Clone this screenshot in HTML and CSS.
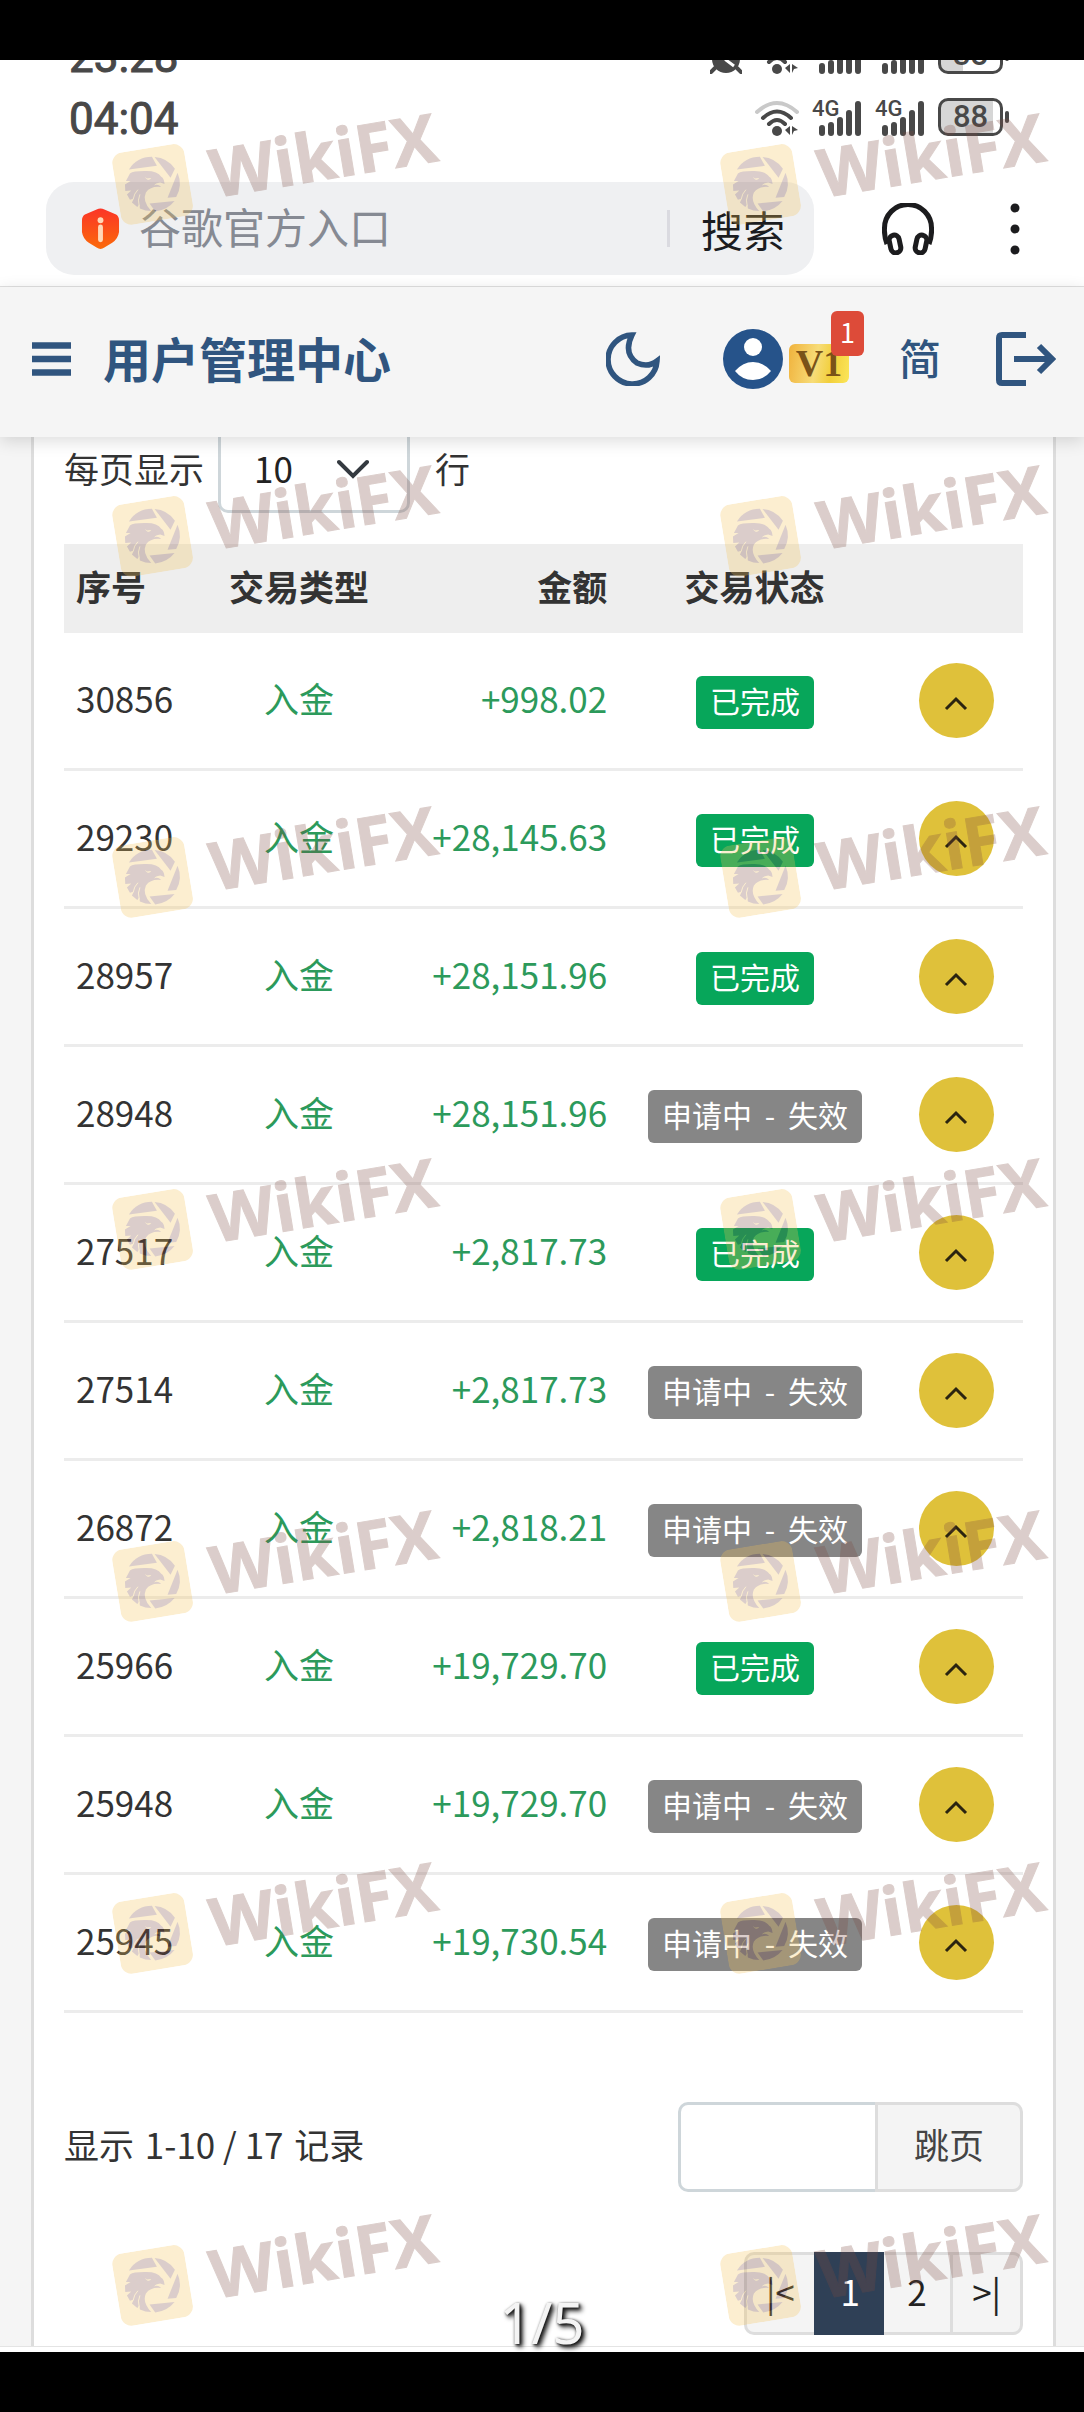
FILE: index.html
```html
<!DOCTYPE html>
<html lang="zh-CN">
<head>
<meta charset="utf-8">
<meta name="viewport" content="width=device-width, initial-scale=1">
<title>用户管理中心</title>
<link rel="stylesheet" href="styles.css">
</head>
<body>
<svg class="defs" aria-hidden="true">
  <symbol id="wifi" viewBox="0 0 44 36">
    <path d="M2 12Q22-6 42 12" fill="none" stroke="#c9c9c9" stroke-width="4" stroke-linecap="round"/>
    <path d="M8 18Q22 5 36 18M14 24Q22 16 30 24" fill="none" stroke="#484848" stroke-width="4" stroke-linecap="round"/>
    <circle cx="22" cy="31" r="5"/><path d="M35 26v9l-5-5zM37 26l6 4-4 1-2 4z"/>
  </symbol>
  <symbol id="signal" viewBox="0 0 50 36">
    <path d="M10 28v5M19 25v8M28 20v13M37 13v20M46 4v29" stroke="#484848" stroke-width="6" stroke-linecap="round"/>
  </symbol>
  <symbol id="chevron-up" viewBox="0 0 24 16">
    <path d="M2 13L12 3l10 10" fill="none" stroke="#2b2410" stroke-width="3"/>
  </symbol>
  <symbol id="eagle" viewBox="0 0 73 73">
    <rect width="73" height="73" rx="11" fill="#f5c355"/>
    <g transform="rotate(9.4 36.5 36.5) translate(36.5 36.5) scale(.333)" fill="#7d4b41">
      <path d="M-71-45A82 82 0 0 1-2-83L13-56Z"/>
      <path d="M6-82A82 82 0 0 1 67-47L54-20Z"/>
      <path d="M75-35A82 82 0 0 1 71 38L45 40Z"/>
      <path d="M66 50A82 82 0 0 1 8 81L-9 57Z"/>
      <path d="M-68-33Q-58-40-25-40Q14-42 26-23Q35-18 36-1L23-6Q8-4 5 3Q16-2 26 8Q-5 4-20 24Q-32 50-4 80Q-22 80-38 72L-40 60L-46 68L-62 54L-56 42L-68 46L-77 30L-64 18L-82 20L-83 0L-66-10L-80-10Z"/>
      <path d="M-58 44Q-56 28-44 16M-40 66Q-46 46-38 30" fill="none" stroke="#f5c355" stroke-width="3"/>
      <path d="M-24-22l8 4 12-1q-5 8-12 4z" fill="#f5c355"/>
    </g>
  </symbol>
</svg>
<div class="screen">
  <div class="bezel"></div>
  <div class="status status-old">
    <span class="time">23:28</span>
    <span class="indicators">
      <svg class="alarm" viewBox="0 0 32 36"><circle cx="16" cy="21" r="14"/><path d="M5 30l-4 4M27 30l4 4" stroke="#484848" stroke-width="4" stroke-linecap="round"/><path d="M16 12v10l8 6" stroke="#fff" stroke-width="3" fill="none"/></svg>
      <svg class="wifi"><use href="#wifi"/></svg>
      <span class="cell">4G<svg><use href="#signal"/></svg></span>
      <span class="cell">4G<svg><use href="#signal"/></svg></span>
      <span class="battery low">38</span>
    </span>
  </div>
  <div class="status">
    <span class="time">04:04</span>
    <span class="indicators">
      <svg class="wifi"><use href="#wifi"/></svg>
      <span class="cell">4G<svg><use href="#signal"/></svg></span>
      <span class="cell">4G<svg><use href="#signal"/></svg></span>
      <span class="battery">88</span>
    </span>
  </div>

  <form class="browser">
    <div class="search">
      <svg class="shield" viewBox="0 0 40 42"><defs><linearGradient id="fire" x2="0" y2="1"><stop stop-color="#fb3527"/><stop offset="1" stop-color="#fb6a0a"/></linearGradient></defs><path d="M16 1Q20-1 24 1L36 6Q39 8 39 12V24Q38 31 32 35L24 40Q20 43 16 40L8 35Q2 31 1 24V12Q1 8 4 6Z" fill="url(#fire)"/><circle cx="20" cy="12" r="3" fill="#ffd9b8"/><path d="M20 19v13" stroke="#ffd9b8" stroke-width="5" stroke-linecap="round"/></svg>
      <input type="text" aria-label="搜索内容" placeholder="谷歌官方入口">
      <button type="button" class="go">搜索</button>
    </div>
    <button type="button" class="icon headphones" aria-label="收听"><svg viewBox="0 0 52 52"><g fill="none" stroke="#1c1c1e" stroke-width="5"><path d="M5 41Q2 33 2.500 25A23.500 23.500 0 0 1 49.500 25Q50 33 47 41"/><rect x="8" y="32" width="10" height="18" rx="5" transform="rotate(-12 13 41)"/><rect x="34" y="32" width="10" height="18" rx="5" transform="rotate(12 39 41)"/></g></svg></button>
    <button type="button" class="icon more" aria-label="更多"><svg viewBox="0 0 10 52"><circle cx="5" cy="5" r="4.500"/><circle cx="5" cy="26" r="4.500"/><circle cx="5" cy="47" r="4.500"/></svg></button>
  </form>

  <header class="topbar">
    <button type="button" class="icon menu" aria-label="菜单"><svg viewBox="0 0 39 34"><path d="M0 3.500h39M0 17h39M0 30.500h39" stroke="#30557f" stroke-width="6.500"/></svg></button>
    <h1>用户管理中心</h1>
    <nav>
      <button type="button" class="icon moon" aria-label="深色模式"><svg viewBox="0 0 54 54"><path d="M26 3A24.500 24.500 0 1 0 51 29Q42 36 31 31Q17 21 26 3Z" fill="none" stroke="#30557f" stroke-width="5.500"/></svg></button>
      <a class="user" href="#" aria-label="账户">
        <svg viewBox="0 0 60 60"><circle cx="30" cy="30" r="30" fill="#26538a"/><circle cx="30" cy="18" r="9" fill="#fff"/><path d="M12 42Q20 33 30 33T48 42Q41 51 30 51T12 42Z" fill="#fff"/></svg>
        <span class="vip">V1</span><span class="count">1</span>
      </a>
      <button type="button" class="lang">简</button>
      <a class="icon logout" href="#" aria-label="退出"><svg viewBox="0 0 60 54"><path d="M30 3H6Q3 3 3 6V48Q3 51 6 51H30M18 27H56M43 14L56 27L43 40" fill="none" stroke="#30557f" stroke-width="6"/></svg></a>
    </nav>
  </header>

  <main>
    <section class="card">
      <div class="toolbar">
        <label for="size">每页显示</label>
        <span class="select"><select id="size"><option>10</option><option>20</option></select><svg viewBox="0 0 32 20"><path d="M2 3l14 14L30 3" fill="none" stroke="#343a40" stroke-width="4" stroke-linecap="round"/></svg></span>
        <span>行</span>
      </div>
      <table>
        <colgroup><col class="c-id"><col class="c-type"><col class="c-sum"><col class="c-state"><col></colgroup>
        <thead><tr><th>序号</th><th>交易类型</th><th>金额</th><th>交易状态</th><th></th></tr></thead>
        <tbody>
          <tr><td>30856</td><td>入金</td><td>+998.02</td><td><span class="tag done">已完成</span></td><td><button type="button" class="toggle" aria-label="展开"><svg><use href="#chevron-up"/></svg></button></td></tr>
          <tr><td>29230</td><td>入金</td><td>+28,145.63</td><td><span class="tag done">已完成</span></td><td><button type="button" class="toggle" aria-label="展开"><svg><use href="#chevron-up"/></svg></button></td></tr>
          <tr><td>28957</td><td>入金</td><td>+28,151.96</td><td><span class="tag done">已完成</span></td><td><button type="button" class="toggle" aria-label="展开"><svg><use href="#chevron-up"/></svg></button></td></tr>
          <tr><td>28948</td><td>入金</td><td>+28,151.96</td><td><span class="tag">申请中 <i>-</i> 失效</span></td><td><button type="button" class="toggle" aria-label="展开"><svg><use href="#chevron-up"/></svg></button></td></tr>
          <tr><td>27517</td><td>入金</td><td>+2,817.73</td><td><span class="tag done">已完成</span></td><td><button type="button" class="toggle" aria-label="展开"><svg><use href="#chevron-up"/></svg></button></td></tr>
          <tr><td>27514</td><td>入金</td><td>+2,817.73</td><td><span class="tag">申请中 <i>-</i> 失效</span></td><td><button type="button" class="toggle" aria-label="展开"><svg><use href="#chevron-up"/></svg></button></td></tr>
          <tr><td>26872</td><td>入金</td><td>+2,818.21</td><td><span class="tag">申请中 <i>-</i> 失效</span></td><td><button type="button" class="toggle" aria-label="展开"><svg><use href="#chevron-up"/></svg></button></td></tr>
          <tr><td>25966</td><td>入金</td><td>+19,729.70</td><td><span class="tag done">已完成</span></td><td><button type="button" class="toggle" aria-label="展开"><svg><use href="#chevron-up"/></svg></button></td></tr>
          <tr><td>25948</td><td>入金</td><td>+19,729.70</td><td><span class="tag">申请中 <i>-</i> 失效</span></td><td><button type="button" class="toggle" aria-label="展开"><svg><use href="#chevron-up"/></svg></button></td></tr>
          <tr><td>25945</td><td>入金</td><td>+19,730.54</td><td><span class="tag">申请中 <i>-</i> 失效</span></td><td><button type="button" class="toggle" aria-label="展开"><svg><use href="#chevron-up"/></svg></button></td></tr>
        </tbody>
      </table>
      <div class="summary">
        <p>显示 <span>1-10 / 17</span> 记录</p>
        <form class="jump"><input type="text" aria-label="页码"><button type="button">跳页</button></form>
      </div>
      <nav class="pages"><a href="#">|&lt;</a><a href="#" class="current">1</a><a href="#">2</a><a href="#">&gt;|</a></nav>
    </section>
  </main>
  <div class="edge"></div>
  <div class="bezel"></div>

  <div class="position">1/5</div>
  <div class="marks" aria-hidden="true">
    <div class="mark"><svg><use href="#eagle"/></svg><span>WikiFX</span></div><div class="mark"><svg><use href="#eagle"/></svg><span>WikiFX</span></div>
    <div class="mark"><svg><use href="#eagle"/></svg><span>WikiFX</span></div><div class="mark"><svg><use href="#eagle"/></svg><span>WikiFX</span></div>
    <div class="mark"><svg><use href="#eagle"/></svg><span>WikiFX</span></div><div class="mark"><svg><use href="#eagle"/></svg><span>WikiFX</span></div>
    <div class="mark"><svg><use href="#eagle"/></svg><span>WikiFX</span></div><div class="mark"><svg><use href="#eagle"/></svg><span>WikiFX</span></div>
    <div class="mark"><svg><use href="#eagle"/></svg><span>WikiFX</span></div><div class="mark"><svg><use href="#eagle"/></svg><span>WikiFX</span></div>
    <div class="mark"><svg><use href="#eagle"/></svg><span>WikiFX</span></div><div class="mark"><svg><use href="#eagle"/></svg><span>WikiFX</span></div>
    <div class="mark"><svg><use href="#eagle"/></svg><span>WikiFX</span></div><div class="mark"><svg><use href="#eagle"/></svg><span>WikiFX</span></div>
  </div>
</div>
</body>
</html>
```
FILE: styles.css
```css
* { box-sizing: border-box; }
body {
  margin: 0;
  background: #fff;
  color: #333;
  font: 35px/48px "Noto Sans CJK SC", sans-serif;
}
h1, p { margin: 0; }
a { color: inherit; text-decoration: none; }
button, input, select { margin: 0; padding: 0; border: 0; background: none; color: inherit; font: inherit; }
svg { display: block; }
.defs { position: absolute; width: 0; height: 0; }
.screen { position: relative; overflow: hidden; }
.bezel { height: 60px; background: #000; }

/* Phone status bar */
.status {
  display: flex;
  justify-content: space-between;
  align-items: flex-end;
  height: 38px;
  margin-bottom: 46px;
  padding: 0 81px 0 69px;
  color: #484848;
  fill: #484848;
}
.status-old { height: 14px; margin-bottom: 24px; overflow: hidden; }
.time { font: 44px/34px Roboto, sans-serif; -webkit-text-stroke: 1px #484848; }
.indicators { display: flex; align-items: flex-end; gap: 13px; }
.alarm { width: 32px; height: 36px; }
.wifi { width: 44px; height: 36px; }
.cell { position: relative; width: 50px; height: 36px; font: 500 22px/18px Roboto, sans-serif; }
.cell svg { position: absolute; top: 0; left: 0; width: 50px; height: 36px; }
.battery {
  position: relative;
  width: 65px;
  height: 38px;
  border: 3px solid #484848;
  border-radius: 10px;
  background: linear-gradient(90deg, #d6d6d6 88%, #fff 88%);
  font: 500 31px/32px Roboto, sans-serif;
  text-align: center;
}
.battery.low { background: linear-gradient(90deg, #d6d6d6 38%, #fff 38%); }
.battery::after { content: ""; position: absolute; top: 10px; right: -9px; width: 4px; height: 12px; border-radius: 2px; background: #484848; }

/* Browser search row */
.browser { display: flex; align-items: center; padding: 0 64px 11px 46px; border-bottom: 1px solid #e0e0e0; }
.search { display: flex; flex: 1; align-items: center; height: 93px; padding-left: 35px; border-radius: 28px; background: #eff0f2; }
.shield { width: 39px; height: 42px; }
.search input { flex: 1; min-width: 0; margin-left: 19px; padding-bottom: 5px; font-size: 42px; line-height: 60px; }
.search input::placeholder { color: #868a93; opacity: 1; }
.go { height: 37px; padding: 0 29px 0 31px; border-left: 3px solid #dadae0; color: #1b1c20; font-size: 42px; line-height: 32px; }
.headphones { width: 52px; margin-left: 68px; }
.more { width: 10px; margin-left: 76px; fill: #1c1c1e; }

/* Site header */
.topbar {
  position: relative;
  z-index: 1;
  display: flex;
  align-items: center;
  height: 150px;
  padding: 0 28px 6px 32px;
  background: #f5f5f5;
  box-shadow: 0 4px 16px rgba(0, 0, 0, .14);
  color: #30557f;
}
.menu { width: 39px; margin-right: 32px; }
h1 { padding-bottom: 5px; font-size: 48px; line-height: 60px; }
.topbar nav { display: flex; align-items: center; gap: 50px; margin-left: auto; }
.moon { width: 54px; margin-right: 13px; }
.user { position: relative; display: flex; align-items: center; gap: 6px; }
.user svg { width: 60px; }
.vip {
  width: 60px;
  height: 39px;
  margin-top: 9px;
  border-radius: 6px;
  background: linear-gradient(100deg, #f0b23c, #f7dc78 45%, #f2cf3a 70%, #fbe65a);
  color: #7a5218;
  font: bold 38px/39px "Liberation Serif", serif;
  text-align: center;
}
.count {
  position: absolute;
  top: -18px;
  right: -15px;
  width: 33px;
  height: 45px;
  border-radius: 6px;
  background: #dd4b39;
  color: #fff;
  font-size: 27px;
  line-height: 41px;
  text-align: center;
}
.lang { margin-right: 5px; padding-bottom: 5px; font-size: 42px; line-height: 60px; font-weight: 500; }
.logout { width: 60px; }

/* Records */
main { padding: 0 28px 0 31px; background: #f5f5f5; }
.card { padding: 0 30px 11px; border: solid #ddd; border-width: 0 3px; background: #fff; }
.toolbar { display: flex; align-items: center; gap: 14px; margin-top: -14px; padding-bottom: 31px; }
.select { position: relative; width: 192px; margin-right: 11px; }
.select select { display: block; width: 100%; height: 90px; padding-left: 33px; border: 3px solid #ced6da; border-radius: 10px; background: #fff; color: #222; appearance: none; }
.select svg { position: absolute; top: 36px; right: 41px; width: 32px; height: 20px; pointer-events: none; }
table { width: 100%; table-layout: fixed; border-spacing: 0; }
.c-id { width: 15%; }
.c-type { width: 19%; }
.c-sum { width: 24%; }
.c-state { width: 28%; }
th { height: 89px; padding: 0 0 6px; background: #eee; }
td { height: 138px; padding: 0 0 6px; border-bottom: 3px solid #ececec; text-align: center; }
td:nth-child(n+4) { padding: 0 0 0 1px; }
th:first-child, td:first-child { padding-left: 12px; text-align: left; }
th:nth-child(3), td:nth-child(3) { padding-right: 13px; text-align: right; }
td:nth-child(2), td:nth-child(3) { color: #2c9a5b; }
.tag { display: inline-block; padding: 0 14px 5px; border-radius: 6px; background: #868686; color: #fff; font-size: 30px; line-height: 48px; vertical-align: middle; }
.tag i { margin: 0 6px; font-style: normal; }
.done { background: #07a65a; }
.toggle { display: grid; place-items: center; width: 75px; height: 75px; margin: 0 auto; padding-top: 6px; border-radius: 50%; background: #dfc13a; }
.toggle svg { width: 24px; height: 16px; }

.summary { display: flex; justify-content: space-between; align-items: center; margin-top: 89px; }
.summary p { padding-bottom: 6px; }
.summary p span { margin: 0 3px; }
.jump { display: flex; width: 36%; height: 90px; }
.jump input { flex: 1; min-width: 0; border: 3px solid #ced6da; border-right: 0; border-radius: 10px 0 0 10px; background: #fff; }
.jump button { width: 148px; padding-bottom: 6px; border: 3px solid #ddd; border-radius: 0 10px 10px 0; background: #f4f4f4; color: #444; }
.pages { display: flex; width: 279px; height: 83px; margin: 60px 0 0 auto; line-height: 71px; text-align: center; }
.pages a { flex: 1; border: solid #ddd; border-width: 3px 0 3px 3px; background: #f4f4f4; color: #222; }
.pages a:first-child { border-radius: 10px 0 0 10px; }
.pages a:last-child { border-right-width: 3px; border-radius: 0 10px 10px 0; }
.pages .current { border-color: #2f4056; background: #2f4056; color: #fff; }
.pages .current + a { border-left: 0; }
.edge { height: 6px; border-top: 1px solid #e4e4e4; }

.position {
  position: absolute;
  bottom: 58px;
  left: 0;
  width: 100%;
  color: #f4f4f4;
  font: 56px/64px "Noto Sans", sans-serif;
  text-align: center;
  text-shadow: 3px 3px 5px #000, 1px 1px 3px #000;
}

/* Tiled watermark above everything */
.marks {
  position: absolute;
  top: 148px;
  left: 116px;
  z-index: 2;
  display: grid;
  grid-template-columns: 608px 300px;
  grid-template-rows: 352px 341px repeat(5, 352px);
  pointer-events: none;
}
.mark { display: flex; gap: 22px; align-items: center; width: 340px; height: 73px; opacity: .27; transform: rotate(-9.4deg); transform-origin: 36px 36px; }
.mark svg { width: 73px; height: 73px; }
.mark span { padding-bottom: 4px; color: #7d4b41; font: bold 67px/69px "Open Sans", sans-serif; -webkit-text-stroke: 1px #7d4b41; }
```
